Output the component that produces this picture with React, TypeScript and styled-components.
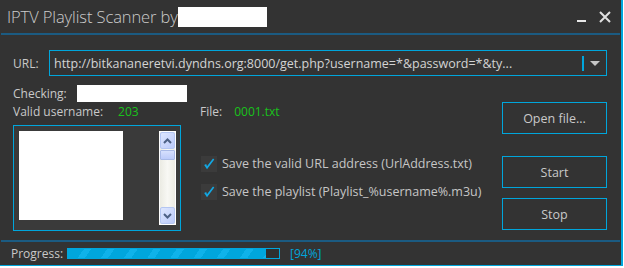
import React from "react";
import styled, { createGlobalStyle } from "styled-components";

const GlobalStyle = createGlobalStyle`
  html, body {
    margin: 0;
    padding: 0;
    background: #ffffff;
  }
  * {
    box-sizing: border-box;
  }
`;

const cyan = "#00a6dc";
const text = "#c9c9c9";
const green = "#19c21b";

const Window = styled.div`
  width: 623px;
  height: 266px;
  background: #333333;
  border-right: 2px solid ${cyan};
  border-bottom: 1px solid ${cyan};
  font-family: "Open Sans", "Noto Sans", sans-serif;
  font-size: 12px;
  color: ${text};
  display: flex;
  flex-direction: column;
`;

const TitleBar = styled.div`
  height: 33px;
  display: flex;
  align-items: center;
  padding: 0 10px 0 7px;
`;

const Title = styled.div`
  font-size: 16.5px;
  font-weight: 300;
  color: #cccccc;
  letter-spacing: -0.1px;
  flex: 1;
  display: flex;
  align-items: center;
`;

const Redacted = styled.span<{ $w: number; $h: number }>`
  display: inline-block;
  flex-shrink: 0;
  width: ${({ $w }) => $w}px;
  height: ${({ $h }) => $h}px;
  background: #ffffff;
`;

const TitleButtons = styled.div`
  display: flex;
  align-items: center;
  gap: 13px;
`;

const Separator = styled.div`
  height: 2px;
  margin: 0 1px;
  background: #1b5b82;
`;

const Body = styled.div`
  height: 205px;
  padding: 15px 14px 0 13px;
  display: flex;
  flex-direction: column;
`;

const UrlRow = styled.div`
  display: flex;
  align-items: center;
  height: 26px;
`;

const Label = styled.span`
  color: ${text};
  white-space: nowrap;
`;

const UrlLabel = styled(Label)`
  width: 36px;
`;

const Combo = styled.div`
  flex: 1;
  height: 26px;
  border: 1px solid ${cyan};
  display: flex;
  align-items: center;
  padding-left: 4px;
`;

const ComboText = styled.span`
  flex: 1;
  font-size: 12.5px;
  color: #d4d4d4;
  white-space: nowrap;
  overflow: hidden;
`;

const ComboDivider = styled.span`
  width: 2px;
  height: 15px;
  background: ${cyan};
  margin-right: 6px;
`;

const ComboArrow = styled.span`
  width: 0;
  height: 0;
  border-left: 5px solid transparent;
  border-right: 5px solid transparent;
  border-top: 5px solid #c6c6c6;
  margin-right: 6px;
`;

const Lower = styled.div`
  display: flex;
`;

const LeftCol = styled.div`
  width: 168px;
  display: flex;
  flex-direction: column;
  padding-top: 8px;
`;

const InfoRow = styled.div<{ $gap: number }>`
  display: flex;
  align-items: center;
  gap: ${({ $gap }) => $gap}px;
  height: 18px;
`;

const Value = styled.span`
  color: ${green};
`;

const ListFrame = styled.div`
  margin-top: 5px;
  height: 106px;
  border: 1px solid ${cyan};
  background: #3a3a3a;
  display: flex;
  justify-content: space-between;
  padding: 5px 4px 5px 5px;
`;

const ListArea = styled.div`
  width: 104px;
  height: 89px;
  background: #ffffff;
`;

const Scrollbar = styled.div`
  width: 17px;
  background: linear-gradient(90deg, #ebebe3, #f8f8f4 50%, #ecece4);
  border: 1px solid #ffffff;
  display: flex;
  flex-direction: column;
`;

const ScrollButton = styled.div`
  height: 17px;
  background: linear-gradient(135deg, #dde6fe, #bccbfa);
  border: 1px solid #b4c6f2;
  border-radius: 2px;
  display: flex;
  align-items: center;
  justify-content: center;
`;

const Thumb = styled.div`
  height: 10px;
  margin-top: 1px;
  background: linear-gradient(180deg, #d6e0fd, #bccbfa);
  border: 1px solid #a8b9e6;
  border-radius: 1px;
`;

const Track = styled.div`
  flex: 1;
`;

const MidCol = styled.div`
  flex: 1;
  padding: 26px 0 0 19px;
  display: flex;
  flex-direction: column;
`;

const FileRow = styled(InfoRow)`
  margin-bottom: 35px;
`;

const CheckRow = styled.div`
  display: flex;
  align-items: center;
  gap: 5px;
  height: 17px;
  margin-bottom: 11px;
  margin-left: 1px;
`;

const CheckBox = styled.span`
  width: 16px;
  height: 16px;
  background: #3b3b3b;
  display: flex;
  align-items: center;
  justify-content: center;
`;

const CheckText = styled.span`
  font-size: 12.5px;
  color: #c6c6c6;
  white-space: nowrap;
`;

const RightCol = styled.div`
  width: 105px;
  padding-top: 26px;
  display: flex;
  flex-direction: column;
`;

const Button = styled.button<{ $mt: number }>`
  height: 32px;
  margin-top: ${({ $mt }) => $mt}px;
  border: 1px solid ${cyan};
  background: transparent;
  color: #c9c9c9;
  font-family: inherit;
  font-size: 12.5px;
  padding: 0;
`;

const Footer = styled.div`
  flex: 1;
  display: flex;
  align-items: center;
  padding: 0 0 1px 11px;
`;

const ProgressLabel = styled(Label)`
  width: 56px;
`;

const ProgressTrack = styled.div`
  width: 213px;
  height: 11px;
  border: 1px solid ${cyan};
  background: #2f2f2f;
`;

const ProgressFill = styled.div`
  height: 100%;
  background: repeating-linear-gradient(
    125deg,
    #00a6dd 0px,
    #00a6dd 13px,
    #0fb2ea 13px,
    #0fb2ea 19px
  );
`;

const Percent = styled.span`
  margin-left: 10px;
  color: ${cyan};
`;

const Check = () => (
  <svg width="14" height="14" viewBox="0 0 14 14">
    <path d="M2.2 8 L5 12.3 L12.3 2.4 L11 1.6 L5 9.3 L4.2 7 Z" fill="#12a8e4" />
  </svg>
);

const Chevron = ({ up }: { up?: boolean }) => (
  <svg width="9" height="6" viewBox="0 0 9 6">
    <path
      d={up ? "M1 5 L4.5 1.5 L8 5" : "M1 1 L4.5 4.5 L8 1"}
      stroke="#4d6185"
      strokeWidth="2"
      fill="none"
    />
  </svg>
);

export default function App() {
  const progress = 94;

  return (
    <>
      <GlobalStyle />
      <Window>
        <TitleBar>
          <Title>
            IPTV Playlist Scanner by
            <Redacted $w={89} $h={20} />
          </Title>
          <TitleButtons>
            <svg width="9" height="12" viewBox="0 0 9 12">
              <rect x="0" y="9" width="9" height="2" fill="#e8e8e8" />
            </svg>
            <svg width="12" height="12" viewBox="0 0 12 12">
              <path d="M1 1 L11 11 M11 1 L1 11" stroke="#e0e0e0" strokeWidth="2" />
            </svg>
          </TitleButtons>
        </TitleBar>
        <Separator />
        <Body>
          <UrlRow>
            <UrlLabel>URL:</UrlLabel>
            <Combo>
              <ComboText>
                http://bitkananeretvi.dyndns.org:8000/get.php?username=*&amp;password=*&amp;ty...
              </ComboText>
              <ComboDivider />
              <ComboArrow />
            </Combo>
          </UrlRow>
          <Lower>
            <LeftCol>
              <InfoRow $gap={10}>
                <Label>Checking:</Label>
                <Redacted $w={110} $h={17} />
              </InfoRow>
              <InfoRow $gap={15}>
                <Label>Valid username:</Label>
                <Value>203</Value>
              </InfoRow>
              <ListFrame>
                <ListArea />
                <Scrollbar>
                  <ScrollButton>
                    <Chevron up />
                  </ScrollButton>
                  <Thumb />
                  <Track />
                  <ScrollButton>
                    <Chevron />
                  </ScrollButton>
                </Scrollbar>
              </ListFrame>
            </LeftCol>
            <MidCol>
              <FileRow $gap={12}>
                <Label>File:</Label>
                <Value>0001.txt</Value>
              </FileRow>
              <CheckRow>
                <CheckBox>
                  <Check />
                </CheckBox>
                <CheckText>Save the valid URL address (UrlAddress.txt)</CheckText>
              </CheckRow>
              <CheckRow>
                <CheckBox>
                  <Check />
                </CheckBox>
                <CheckText>Save the playlist (Playlist_%username%.m3u)</CheckText>
              </CheckRow>
            </MidCol>
            <RightCol>
              <Button $mt={0}>Open file...</Button>
              <Button $mt={22}>Start</Button>
              <Button $mt={10}>Stop</Button>
            </RightCol>
          </Lower>
        </Body>
        <Separator />
        <Footer>
          <ProgressLabel>Progress:</ProgressLabel>
          <ProgressTrack>
            <ProgressFill style={{ width: `${progress}%` }} />
          </ProgressTrack>
          <Percent>[{progress}%]</Percent>
        </Footer>
      </Window>
    </>
  );
}
